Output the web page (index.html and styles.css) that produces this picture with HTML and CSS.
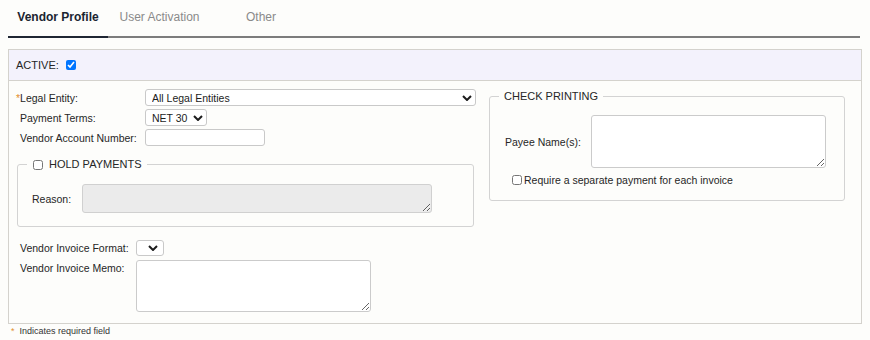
FILE: index.html
```html
<!DOCTYPE html>
<html lang="en">
<head>
    <meta charset="UTF-8">
    <meta name="viewport" content="width=device-width, initial-scale=1.0">
    <title>Vendor Profile</title>
    <link rel="stylesheet" href="styles.css">
</head>
<body>
    <div class="page">
        <nav class="tabs">
            <a class="tab tab-active">Vendor Profile</a>
            <a class="tab tab-mid">User Activation</a>
            <a class="tab">Other</a>
        </nav>

        <section class="panel">
            <header class="panel-head">
                <label for="active">ACTIVE:</label>
                <input type="checkbox" id="active" checked>
            </header>

            <div class="panel-body">
                <div class="col-left">
                    <div class="field-grid">
                        <label class="label req"><span class="star">*</span>Legal Entity:</label>
                        <div class="select select-entity">
                            <select><option>All Legal Entities</option></select>
                            <svg class="chevron" width="10" height="6" viewBox="0 0 10 6"><path d="M1 1 L5 5 L9 1" fill="none" stroke="#1c1c1c" stroke-width="2"/></svg>
                        </div>

                        <label class="label">Payment Terms:</label>
                        <div class="select select-terms">
                            <select><option>NET 30</option></select>
                            <svg class="chevron" width="10" height="6" viewBox="0 0 10 6"><path d="M1 1 L5 5 L9 1" fill="none" stroke="#1c1c1c" stroke-width="2"/></svg>
                        </div>

                        <label class="label">Vendor Account Number:</label>
                        <input type="text" class="text-input">
                    </div>

                    <fieldset class="group group-hold">
                        <legend><input type="checkbox" id="hold"><label for="hold">HOLD PAYMENTS</label></legend>
                        <div class="group-row reason-row">
                            <label>Reason:</label>
                            <textarea class="reason" disabled></textarea>
                        </div>
                    </fieldset>

                    <div class="field-grid invoice-grid">
                        <label class="label">Vendor Invoice Format:</label>
                        <div class="select select-format">
                            <select><option></option></select>
                            <svg class="chevron" width="10" height="6" viewBox="0 0 10 6"><path d="M1 1 L5 5 L9 1" fill="none" stroke="#1c1c1c" stroke-width="2"/></svg>
                        </div>

                        <label class="label label-top">Vendor Invoice Memo:</label>
                        <textarea class="memo"></textarea>
                    </div>
                </div>

                <div class="col-right">
                    <fieldset class="group group-check">
                        <legend>CHECK PRINTING</legend>
                        <div class="group-row payee-row">
                            <label>Payee Name(s):</label>
                            <textarea class="payee"></textarea>
                        </div>
                        <label class="check-line"><input type="checkbox">Require a separate payment for each invoice</label>
                    </fieldset>
                </div>
            </div>
        </section>

        <p class="note"><span class="star">*</span>Indicates required field</p>
    </div>
</body>
</html>
```

FILE: styles.css
```css
body {
    margin: 0;
    background: #fdfdfb;
    font-family: "Liberation Sans", Arial, sans-serif;
    font-size: 10.5px;
    color: #262626;
}

.page {
    padding: 0 8px;
}

/* Tabs */
.tabs {
    display: flex;
    margin-right: 2px;
    border-bottom: 2px solid #7c7c7c;
}

.tab {
    min-width: 100px;
    padding: 10px 0 12px;
    margin-bottom: -2px;
    border-bottom: 2px solid transparent;
    font-size: 12px;
    line-height: 14px;
    text-align: center;
    color: #8a8a8a;
    cursor: pointer;
}

.tab-mid {
    min-width: 103px;
}

.tab-active {
    color: #1b2430;
    font-weight: bold;
    border-bottom-color: #1f2633;
}

/* Panel */
.panel {
    margin-top: 11px;
    border: 1px solid #d4d2cd;
}

.panel-head {
    display: flex;
    align-items: center;
    gap: 7px;
    height: 30px;
    padding-left: 7px;
    background: #f3f2fc;
    border-bottom: 1px solid #d4d2cd;
    font-size: 11px;
}

input[type="checkbox"] {
    width: 10px;
    height: 10px;
    margin: 0;
}

.panel-body {
    display: grid;
    grid-template-columns: 460px 1fr;
    column-gap: 13px;
    align-items: start;
    padding: 8px 16px 11px 7px;
}

.field-grid {
    display: grid;
    grid-template-columns: 129px auto;
    row-gap: 3px;
    align-items: center;
    justify-items: start;
}

.label {
    padding-left: 4px;
}

.label.req {
    padding-left: 0;
}

.star {
    color: #e3902f;
}

.select {
    position: relative;
}

.select select {
    display: block;
    height: 17px;
    padding: 0 16px 0 6px;
    border: 1px solid #c9c9c9;
    border-radius: 3px;
    background: #fff;
    font: inherit;
    color: #1c1c1c;
    -webkit-appearance: none;
    appearance: none;
}

.chevron {
    position: absolute;
    right: 4px;
    top: 6px;
    pointer-events: none;
}

.select-entity select {
    width: 331px;
}

.select-terms select {
    width: 62px;
}

.select-format select {
    width: 28px;
    height: 16px;
}

.select-format .chevron {
    top: 5px;
    right: 6px;
}

.text-input {
    box-sizing: border-box;
    width: 120px;
    height: 17px;
    margin: 0;
    border: 1px solid #c9c9c9;
    border-radius: 3px;
    background: #fff;
}

textarea {
    box-sizing: border-box;
    margin: 0;
    border: 1px solid #cbcbcb;
    border-radius: 3px;
    background: #fff;
    font: inherit;
}

/* Fieldsets */
.group {
    min-width: 0;
    margin: 0;
    padding: 0 9px;
    border: 1px solid #d3d3d3;
    border-radius: 3px;
}

.group legend {
    display: flex;
    align-items: center;
    padding: 0 5px;
    font-size: 11px;
    line-height: 13px;
}

.group-row {
    display: flex;
    align-items: center;
}

.group-hold {
    margin: 12px 2px 0 1px;
    padding-bottom: 13px;
}

.group-hold legend input {
    margin: 0 6px 0 1px;
}

.reason-row {
    padding: 13px 0 0 5px;
}

.reason-row label {
    width: 50px;
}

.reason {
    width: 350px;
    height: 29px;
    background: #ebebeb;
    border-color: #d0d0d0;
}

.invoice-grid {
    grid-template-columns: 120px auto;
    row-gap: 4px;
    margin-top: 13px;
}

.label-top {
    align-self: start;
    padding-top: 2px;
}

.memo {
    width: 235px;
    height: 52px;
}

.group-check {
    margin-top: 1px;
    padding-bottom: 14px;
}

.payee-row {
    padding: 12px 0 0 6px;
}

.payee-row label {
    width: 86px;
}

.payee {
    width: 235px;
    height: 53px;
}

.check-line {
    display: flex;
    align-items: center;
    gap: 2px;
    margin-top: 6px;
    padding-left: 13px;
    line-height: 12px;
}

.note {
    margin: 0;
    padding-left: 3px;
    font-size: 9px;
    line-height: 14px;
    color: #333;
}

.note .star {
    margin-right: 5px;
}
```
